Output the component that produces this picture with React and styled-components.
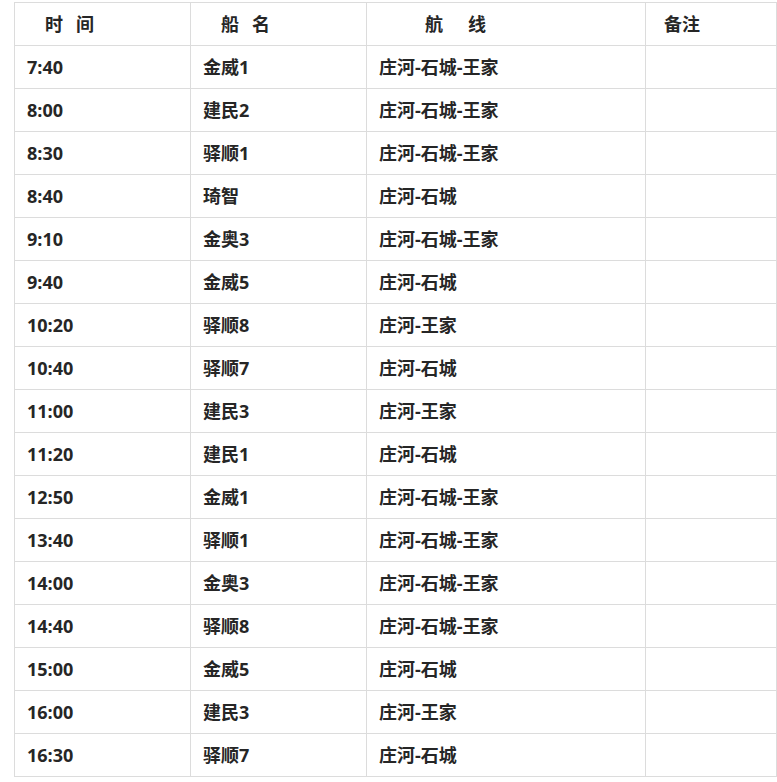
import React from "react";
import styled, { createGlobalStyle } from "styled-components";

const GlobalStyle = createGlobalStyle`
  html, body {
    margin: 0;
    padding: 0;
    background: #fff;
  }
  body {
    font-family: "Open Sans", "Noto Sans CJK SC", sans-serif;
    color: #262626;
  }
`;

const Page = styled.div`
  padding: 2px 0 0 14px;
`;

const Table = styled.table`
  width: 762px;
  table-layout: fixed;
  border-collapse: collapse;
  font-size: 18px;
  font-weight: 700;
`;

const Row = styled.tr`
  height: 43px;
`;

const HeadCell = styled.th`
  border: 1px solid #dcdcdc;
  padding: 0 0 0 ${(p) => 12 + (p.$indent || 0)}px;
  text-align: left;
  font-weight: 700;
  letter-spacing: ${(p) => p.$spacing || 0}px;
  line-height: 1;
  vertical-align: middle;
`;

const Cell = styled.td`
  border: 1px solid #dcdcdc;
  padding: 0 0 0 12px;
  line-height: 1;
  vertical-align: middle;
  white-space: nowrap;
`;

const headers = [
  { label: "时间", indent: 18, spacing: 13 },
  { label: "船名", indent: 18, spacing: 13 },
  { label: "航线", indent: 46, spacing: 25 },
  { label: "备注", indent: 6, spacing: 0 },
];

const schedule = [
  ["7:40", "金威1", "庄河-石城-王家"],
  ["8:00", "建民2", "庄河-石城-王家"],
  ["8:30", "驿顺1", "庄河-石城-王家"],
  ["8:40", "琦智", "庄河-石城"],
  ["9:10", "金奥3", "庄河-石城-王家"],
  ["9:40", "金威5", "庄河-石城"],
  ["10:20", "驿顺8", "庄河-王家"],
  ["10:40", "驿顺7", "庄河-石城"],
  ["11:00", "建民3", "庄河-王家"],
  ["11:20", "建民1", "庄河-石城"],
  ["12:50", "金威1", "庄河-石城-王家"],
  ["13:40", "驿顺1", "庄河-石城-王家"],
  ["14:00", "金奥3", "庄河-石城-王家"],
  ["14:40", "驿顺8", "庄河-石城-王家"],
  ["15:00", "金威5", "庄河-石城"],
  ["16:00", "建民3", "庄河-王家"],
  ["16:30", "驿顺7", "庄河-石城"],
];

const App = () => {
  return (
    <Page>
      <GlobalStyle />
      <Table>
        <colgroup>
          <col style={{ width: "176px" }} />
          <col style={{ width: "176px" }} />
          <col style={{ width: "279px" }} />
          <col style={{ width: "131px" }} />
        </colgroup>
        <thead>
          <Row>
            {headers.map((h) => (
              <HeadCell key={h.label} $indent={h.indent} $spacing={h.spacing}>
                {h.label}
              </HeadCell>
            ))}
          </Row>
        </thead>
        <tbody>
          {schedule.map(([time, ship, route], i) => (
            <Row key={i}>
              <Cell>{time}</Cell>
              <Cell>{ship}</Cell>
              <Cell>{route}</Cell>
              <Cell />
            </Row>
          ))}
        </tbody>
      </Table>
    </Page>
  );
};

export default App;
